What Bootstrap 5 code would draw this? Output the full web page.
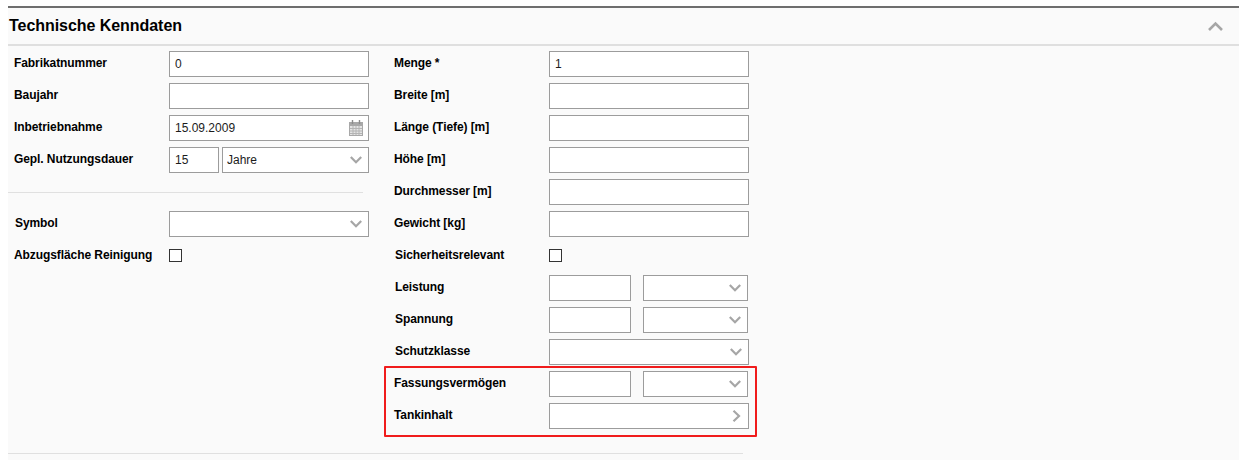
<!DOCTYPE html>
<html lang="de">
<head>
    <meta charset="UTF-8">
    <meta name="viewport" content="width=device-width, initial-scale=1.0">
    <title>Technische Kenndaten</title>
    <link href="https://cdn.jsdelivr.net/npm/bootstrap@5.3.0/dist/css/bootstrap.min.css" rel="stylesheet">
    <style>
        body {
            background-color: #fff;
            font-family: "Liberation Sans", Arial, sans-serif;
            font-size: 12px;
            color: #000;
            overflow: hidden;
        }
        .data-panel {
            margin: 6px 0 0 8px;
            height: 454px;
            background-color: #fafafa;
            border-top: 2px solid #6e6e6e;
        }
        .panel-head {
            height: 38px;
            border-bottom: 2px solid #dfdfdf;
        }
        .panel-title {
            margin: 0 0 0 1px;
            font-size: 16px;
            font-weight: 700;
            line-height: 38px;
            letter-spacing: -0.05px;
        }
        .panel-toggle {
            margin-right: 16px;
        }
        .panel-body {
            padding-top: 5px;
        }
        .col-left {
            width: 361px;
            margin-right: 25px;
        }
        .col-right {
            width: 364px;
        }
        .field-row {
            display: flex;
            height: 26px;
            margin-bottom: 6px;
        }
        .field-label {
            flex: 0 0 161px;
            margin: 0;
            padding: 5px 0 0 6px;
            font-weight: 700;
            line-height: 14px;
            letter-spacing: -0.08px;
        }
        .col-right .field-label {
            flex-basis: 155px;
            padding-left: 0;
        }
        .inset-label {
            padding-left: 7px;
        }
        .col-right .inset-label {
            padding-left: 1px;
        }
        .field-box {
            position: relative;
            width: 200px;
        }
        .form-control.field-input,
        .form-select.field-input {
            height: 26px;
            min-height: 0;
            padding: 0 5px;
            font-size: 12px;
            line-height: 24px;
            color: #1c1c1c;
            background-color: #fff;
            border: 1px solid #9c9c9c;
            border-radius: 0;
        }
        .form-select.field-input {
            padding-left: 4px;
            background-image: url("data:image/svg+xml,%3Csvg xmlns='http://www.w3.org/2000/svg' viewBox='0 0 12 8'%3E%3Cpath d='M.8 1l5.200 5.200L11.200 1' fill='none' stroke='%23a6a6a6' stroke-width='2.200'/%3E%3C/svg%3E");
            background-position: right 6px center;
            background-size: 12px 8px;
        }
        .w-short { flex: 0 0 50px; width: 50px; }
        .w-unit { flex: 0 0 147px; width: 147px; margin-left: 3px; }
        .w-value { flex: 0 0 82px; width: 82px; }
        .w-select { flex: 0 0 105px; width: 105px; margin-left: 12px; }
        .icon-calendar {
            position: absolute;
            top: 5px;
            right: 6px;
        }
        .icon-next {
            position: absolute;
            top: 7px;
            right: 8px;
        }
        .field-check {
            width: 13px;
            height: 13px;
            margin: 6px 0 0 0;
            border: 1px solid #333;
            background-color: #fff;
            border-radius: 0;
            appearance: none;
        }
        .section-line {
            width: 355px;
            height: 0;
            margin: 19px 0 18px;
            border-top: 1px solid #e0e0e0;
            opacity: 1;
        }
        .marked-group {
            width: 373px;
            height: 71px;
            margin: -5px 0 0 -10px;
            padding: 3px 0 0 8px;
            border: 2px solid #f01c1c;
            border-radius: 1px;
        }
        .end-line {
            width: 735px;
            margin: 16px 0 0;
            border-top: 1px solid #e0e0e0;
            opacity: 1;
        }
    </style>
</head>
<body>

    <div class="data-panel">
        <div class="panel-head d-flex justify-content-between align-items-center">
            <h1 class="panel-title">Technische Kenndaten</h1>
            <svg class="panel-toggle" width="15" height="10" viewBox="0 0 15 10"><path d="M1 9l6.500-6.500L14 9" fill="none" stroke="#a6a6a6" stroke-width="2.600"/></svg>
        </div>

        <div class="panel-body">
            <div class="d-flex">
                <div class="col-left">
                    <div class="field-row">
                        <label class="field-label" for="fabrikat">Fabrikatnummer</label>
                        <div class="field-box"><input id="fabrikat" type="text" class="form-control field-input" value="0"></div>
                    </div>
                    <div class="field-row">
                        <label class="field-label" for="baujahr">Baujahr</label>
                        <div class="field-box"><input id="baujahr" type="text" class="form-control field-input"></div>
                    </div>
                    <div class="field-row">
                        <label class="field-label" for="inbetrieb">Inbetriebnahme</label>
                        <div class="field-box">
                            <input id="inbetrieb" type="text" class="form-control field-input" value="15.09.2009">
                            <svg class="icon-calendar" width="14" height="16" viewBox="0 0 14 16">
                                <rect x="0.5" y="2.5" width="13" height="13" fill="#e4e4e4" stroke="#a8a8a8"/>
                                <rect x="1" y="3" width="12" height="3" fill="#a8a8a8"/>
                                <path d="M3.500 0v4M10.500 0v4" stroke="#8c8c8c" stroke-width="1.400"/>
                                <path d="M1 8.500h12M1 11h12M1 13.500h12M4 6v9M7 6v9M10 6v9" stroke="#b4b4b4" stroke-width="1"/>
                            </svg>
                        </div>
                    </div>
                    <div class="field-row">
                        <label class="field-label" for="dauer">Gepl. Nutzungsdauer</label>
                        <div class="field-box d-flex">
                            <input id="dauer" type="text" class="form-control field-input w-short" value="15">
                            <select class="form-select field-input w-unit" aria-label="Einheit"><option>Jahre</option></select>
                        </div>
                    </div>

                    <hr class="section-line">

                    <div class="field-row">
                        <label class="field-label inset-label" for="symbol">Symbol</label>
                        <div class="field-box"><select id="symbol" class="form-select field-input"><option></option></select></div>
                    </div>
                    <div class="field-row">
                        <label class="field-label" for="abzug">Abzugsfläche Reinigung</label>
                        <div class="field-box"><input id="abzug" type="checkbox" class="field-check d-block"></div>
                    </div>
                </div>

                <div class="col-right">
                    <div class="field-row">
                        <label class="field-label" for="menge">Menge *</label>
                        <div class="field-box"><input id="menge" type="text" class="form-control field-input" value="1"></div>
                    </div>
                    <div class="field-row">
                        <label class="field-label" for="breite">Breite [m]</label>
                        <div class="field-box"><input id="breite" type="text" class="form-control field-input"></div>
                    </div>
                    <div class="field-row">
                        <label class="field-label" for="laenge">Länge (Tiefe) [m]</label>
                        <div class="field-box"><input id="laenge" type="text" class="form-control field-input"></div>
                    </div>
                    <div class="field-row">
                        <label class="field-label" for="hoehe">Höhe [m]</label>
                        <div class="field-box"><input id="hoehe" type="text" class="form-control field-input"></div>
                    </div>
                    <div class="field-row">
                        <label class="field-label" for="durchmesser">Durchmesser [m]</label>
                        <div class="field-box"><input id="durchmesser" type="text" class="form-control field-input"></div>
                    </div>
                    <div class="field-row">
                        <label class="field-label" for="gewicht">Gewicht [kg]</label>
                        <div class="field-box"><input id="gewicht" type="text" class="form-control field-input"></div>
                    </div>
                    <div class="field-row">
                        <label class="field-label inset-label" for="sicher">Sicherheitsrelevant</label>
                        <div class="field-box"><input id="sicher" type="checkbox" class="field-check d-block"></div>
                    </div>
                    <div class="field-row">
                        <label class="field-label inset-label" for="leistung">Leistung</label>
                        <div class="field-box d-flex">
                            <input id="leistung" type="text" class="form-control field-input w-value">
                            <select class="form-select field-input w-select" aria-label="Einheit Leistung"><option></option></select>
                        </div>
                    </div>
                    <div class="field-row">
                        <label class="field-label inset-label" for="spannung">Spannung</label>
                        <div class="field-box d-flex">
                            <input id="spannung" type="text" class="form-control field-input w-value">
                            <select class="form-select field-input w-select" aria-label="Einheit Spannung"><option></option></select>
                        </div>
                    </div>
                    <div class="field-row">
                        <label class="field-label inset-label" for="schutz">Schutzklasse</label>
                        <div class="field-box"><select id="schutz" class="form-select field-input"><option></option></select></div>
                    </div>

                    <div class="marked-group">
                        <div class="field-row">
                            <label class="field-label" for="fassung">Fassungsvermögen</label>
                            <div class="field-box d-flex">
                                <input id="fassung" type="text" class="form-control field-input w-value">
                                <select class="form-select field-input w-select" aria-label="Einheit Fassungsvermögen"><option></option></select>
                            </div>
                        </div>
                        <div class="field-row">
                            <label class="field-label" for="tank">Tankinhalt</label>
                            <div class="field-box">
                                <input id="tank" type="text" class="form-control field-input">
                                <svg class="icon-next" width="9" height="12" viewBox="0 0 9 12"><path d="M1.500.8l5.500 5.200-5.500 5.200" fill="none" stroke="#a6a6a6" stroke-width="2.200"/></svg>
                            </div>
                        </div>
                    </div>
                </div>
            </div>
            <hr class="end-line">
        </div>
    </div>

</body>
</html>
